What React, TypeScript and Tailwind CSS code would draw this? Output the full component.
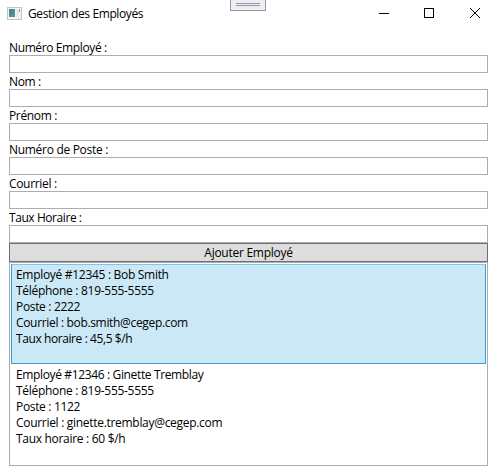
type Line = { text: string; spacing?: string };

const fields: Line[] = [
  { text: "Numéro Employé :", spacing: "tracking-[-0.38px]" },
  { text: "Nom :", spacing: "tracking-[-0.4px]" },
  { text: "Prénom :", spacing: "tracking-[-0.35px]" },
  { text: "Numéro de Poste :", spacing: "tracking-[-0.3px]" },
  { text: "Courriel :" },
  { text: "Taux Horaire :", spacing: "tracking-[-0.43px]" },
];

const employees: Line[][] = [
  [
    { text: "Employé #12345 : Bob Smith", spacing: "tracking-[-0.3px]" },
    { text: "Téléphone : 819-555-5555", spacing: "tracking-[-0.29px]" },
    { text: "Poste : 2222" },
    { text: "Courriel : bob.smith@cegep.com" },
    { text: "Taux horaire : 45,5 $/h", spacing: "tracking-[-0.41px]" },
  ],
  [
    { text: "Employé #12346 : Ginette Tremblay", spacing: "tracking-[-0.36px]" },
    { text: "Téléphone : 819-555-5555", spacing: "tracking-[-0.29px]" },
    { text: "Poste : 1122" },
    { text: "Courriel : ginette.tremblay@cegep.com", spacing: "tracking-[-0.3px]" },
    { text: "Taux horaire : 60 $/h", spacing: "tracking-[-0.3px]" },
  ],
];

function TitleBar() {
  return (
    <header className="relative flex h-[27px] items-center pl-[7px]">
      <svg width="15" height="13" viewBox="0 0 15 13" shapeRendering="crispEdges">
        <defs>
          <linearGradient id="pane" x1="0" y1="0" x2="1" y2="1">
            <stop offset="0" stopColor="#4a78a8" />
            <stop offset="1" stopColor="#4fa777" />
          </linearGradient>
        </defs>
        <rect x="0.5" y="0.5" width="14" height="12" fill="#f4f4f4" stroke="#c4c4c4" />
        <rect x="2" y="2" width="6" height="8" fill="url(#pane)" />
        <rect x="9" y="2" width="3" height="8" fill="#e8e8e8" />
        <rect x="12" y="2" width="1" height="3" fill="#71a893" />
      </svg>
      <span className="ml-[6px] leading-4 tracking-[-0.39px]">Gestion des Employés</span>
      <div className="absolute left-[230px] top-0 flex h-[11px] w-9 flex-col items-center gap-px border border-t-0 border-[#98969c] bg-[#eeedf3] pt-[3px]">
        <i className="h-px w-6 bg-[#98969c]" />
        <i className="h-px w-6 bg-[#98969c]" />
      </div>
      <svg className="absolute left-[379px] top-[8px]" width="102" height="10" fill="none" stroke="#000">
        <path d="M0 5.5H10M45.5 .5H54.5V9.5H45.5Z" shapeRendering="crispEdges" />
        <path d="M91 0L101 10M101 0L91 10" />
      </svg>
    </header>
  );
}

export default function App() {
  return (
    <div className="h-[476px] w-[498px] overflow-hidden bg-white font-['Open_Sans','Noto_Sans',sans-serif] text-[12px] text-black">
      <TitleBar />
      <main className="ml-[9px] mt-3 w-[479px]">
        {fields.map((f) => (
          <label key={f.text} className="block">
            <span className={`block h-4 whitespace-nowrap pt-px leading-4 ${f.spacing ?? "tracking-[-0.33px]"}`}>{f.text}</span>
            <input className="block h-[18px] w-full border border-[#abadb3] bg-white px-1 outline-none" />
          </label>
        ))}
        <button className="flex h-[19px] w-full items-center justify-center border border-[#707070] bg-[#dddddd] pt-px leading-4 tracking-[-0.27px]">
          Ajouter Employé
        </button>
        <ul className="h-[204px] border border-[#abadb3] p-px">
          {employees.map((lines, i) => (
            <li
              key={i}
              className={`h-[100px] border px-1 py-px ${i === 0 ? "border-[#3a9fd0] border-t-[#84c5e6] bg-[#cbe8f6]" : "border-transparent"}`}
            >
              {lines.map((l) => (
                <div key={l.text} className={`h-4 whitespace-nowrap pt-px leading-4 ${l.spacing ?? "tracking-[-0.33px]"}`}>
                  {l.text}
                </div>
              ))}
            </li>
          ))}
        </ul>
      </main>
    </div>
  );
}
